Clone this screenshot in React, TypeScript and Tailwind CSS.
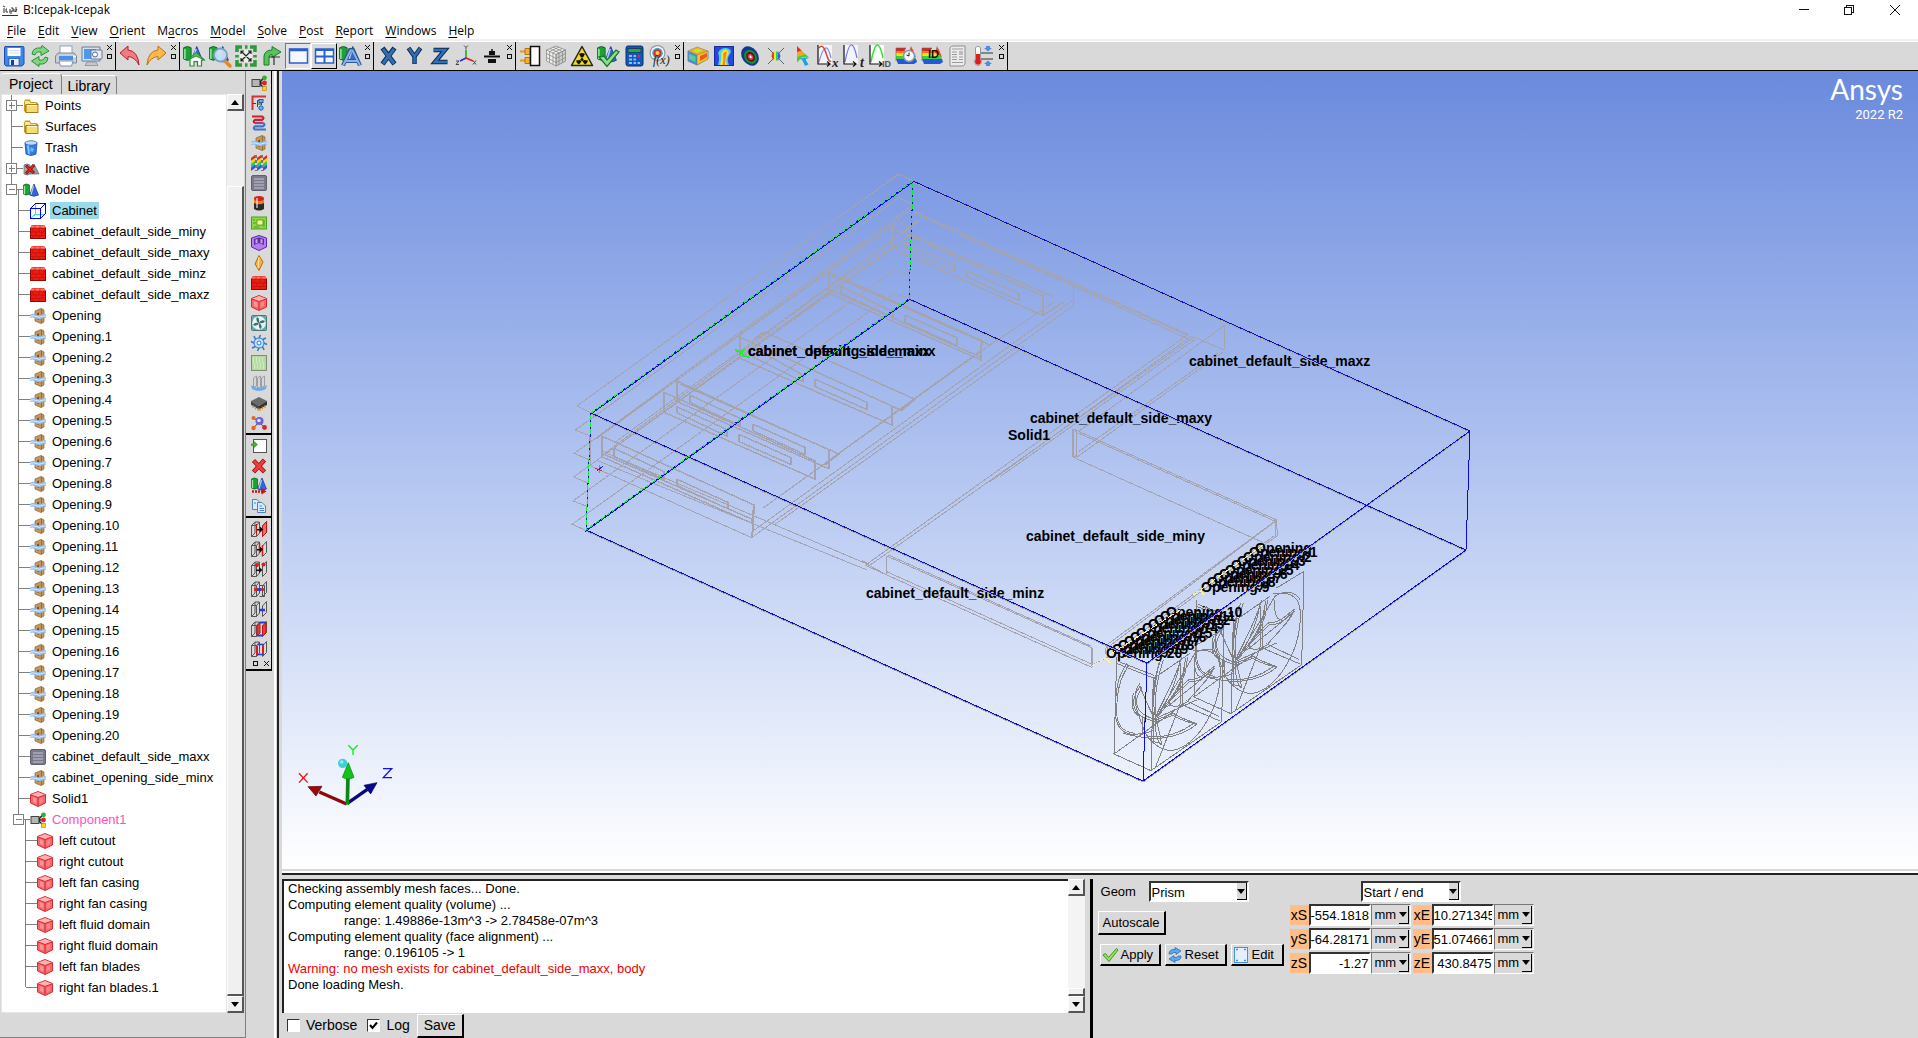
import React from "react";

type IconDef = { label: string; art: React.ReactNode };

/* ---------- small 16px object icons ---------- */

const Folder = (
  <g>
    <path d="M1 4 L1 13 L3 15 L15 15 L15 5 L13 4 L8 4 L7 1.500 L2 1.500 Z" fill="#c79b26" />
    <path d="M2 3 H6.500 L7.500 5 H13 V7 H2 Z" fill="#f7e7a0" />
    <rect x="3" y="6.500" width="12" height="8" fill="#f5dc6e" stroke="#8e6c14" strokeWidth="0.800" />
    <path d="M4 7.500 H14" stroke="#fff8cf" />
  </g>
);
const Trash = (
  <g>
    <path d="M2 3 L3 14 Q8 17 13 14 L14 3 Z" fill="#2f7de0" stroke="#1553a8" strokeWidth="0.800" />
    <path d="M4 5 L5 14 L7 14.500 L6 5 Z" fill="#8cc4ff" />
    <ellipse cx="8" cy="3" rx="6" ry="2.200" fill="#bfe0ff" stroke="#1f64bd" strokeWidth="0.800" />
    <path d="M8 7 L11 9 L10 12 L7 11 Z" fill="#6fb2ff" />
  </g>
);
const Inactive = (
  <g>
    <path d="M1 4 Q4 2 7 4 V13 Q4 15 1 13 Z" fill="#a9a9a9" stroke="#666" strokeWidth="0.700" />
    <path d="M11 3 L16 13 H7 Z" fill="#9a9a9a" stroke="#666" strokeWidth="0.700" />
    <path d="M3 4.500 L11 12 M11 4 L3 12.500" stroke="#7a0b0b" strokeWidth="3" />
    <path d="M3.500 5 L10.500 11.500 M10.500 4.500 L3.500 12" stroke="#e62a2a" strokeWidth="1.600" />
  </g>
);
const ModelIcon = (
  <g>
    <path d="M0.500 3 Q3.500 1 6.500 3 V12 Q3.500 14 0.500 12 Z" fill="#1ba336" stroke="#0a5f1a" strokeWidth="0.700" />
    <path d="M1.500 4 V12" stroke="#9be8a4" strokeWidth="1.200" />
    <path d="M11 2 L15.500 13 Q11 15.500 6.500 13 Z" fill="#3565d8" stroke="#173a92" strokeWidth="0.700" />
    <path d="M10.500 4 L8 12.500" stroke="#b5cdfd" strokeWidth="1.200" />
  </g>
);
const CabinetIcon = (
  <g fill="none" strokeWidth="1" shapeRendering="crispEdges">
    <path d="M5.500 1 V11 H15 M5.500 11 L1 15" stroke="#33e0ee" />
    <path d="M0.500 5.500 H10.500 V15.500 H0.500 Z M0.500 5.500 L5.500 0.500 H15.500 L10.500 5.500 M15.500 0.500 V10.500 L10.500 15.500" stroke="#0000f0" />
  </g>
);
const Wall = (
  <g>
    <path d="M2 1 H14 L16 4 V15 H0 V4 Z" fill="#ee1c12" />
    <path d="M2 1.500 H14 L15.500 4 H0.500 Z" fill="#ff7a6c" />
    <path d="M0 4 H16 M0 8 H16 M0 11.500 H16 M3 4 V8 M9 4 V8 M14 4 V8 M6 8 V11.500 M12 8 V11.500 M3 11.500 V15 M9 11.500 V15 M5 1.500 V4 M10 1.500 V4" stroke="#b80f08" strokeWidth="0.600" fill="none" />
    <path d="M0.500 4 V14.500 H15.500 V4" stroke="#8c0a05" fill="none" />
  </g>
);
const OpeningIcon = (
  <g>
    <path d="M5 3 L11 0.500 L14 2 V14 L11 15.500 L5 13 Z" fill="#c4985c" stroke="#8a6430" strokeWidth="0.700" />
    <path d="M11.500 0.800 V15.300" stroke="#946c38" />
    <path d="M7 5.500 L9 4.500 V12 L7 11 Z" fill="#6a5434" />
    <path d="M0 7 Q3 5 6 6.500 T12 6.500 T16 7 V10 Q14 9 12 10.500 T6 10.500 T0 10 Z" fill="#8fbbf0" />
    <path d="M0 8.500 Q3 7 6 8.500 T12 8.500 T16 8.500" stroke="#dcecff" fill="none" />
  </g>
);
const Solid = (
  <g>
    <path d="M8 0.500 L15.500 3.500 V12 L8 15.500 L0.500 12 V3.500 Z" fill="#f4686c" stroke="#d01c26" strokeWidth="0.900" />
    <path d="M8 1 L15 3.800 L8 6.500 L1 3.800 Z" fill="#ffb4b2" />
    <path d="M8 6.500 V15 M1 4 L8 6.500 L15 4" stroke="#da2630" fill="none" />
    <path d="M3 6 L6.500 7.500 V12.500 L3 11 Z" fill="#fb9496" />
    <path d="M13 6 L9.500 7.500 V12.500 L13 11 Z" fill="#ff8286" />
  </g>
);
const Grille = (
  <g>
    <rect x="0.500" y="0.500" width="15" height="15" rx="1.500" fill="#7a7a8c" stroke="#60606e" />
    <path d="M3 4 H13 M3 7 H13 M3 10 H13 M3 13 H13" stroke="#c4c4cf" strokeWidth="1.200" />
  </g>
);
const Assembly = (
  <g>
    <rect x="1" y="4.500" width="8" height="7" fill="#b5b5b5" stroke="#444" />
    <path d="M9 7 L13 2.500 M9 8 H13 M9 9 L13 13" stroke="#222" strokeWidth="1.500" />
    <circle cx="13.500" cy="2.800" r="2.400" fill="#26b52c" />
    <circle cx="13.500" cy="8" r="2.400" fill="#e02323" />
    <rect x="11.500" y="11.500" width="4" height="4" fill="#ffd21f" stroke="#b08000" strokeWidth="0.600" />
  </g>
);

/* ---------- side toolbar ---------- */

const plates = (mode: React.ReactNode) => (
  <g fill="none">
    <path d="M0.500 4.500 L4 1 V12 L0.500 15.500 Z M0.500 4.500 H5.500 V15.500 H0.500 M5.500 4.500 L8.500 1 H4 M5.500 15.500 L8.500 12 V1" stroke="#555" />
    <path d="M11.500 5 L15.500 0.500 V11.500 L11.500 15.500 Z" stroke="#555" />
    {mode}
  </g>
);

const sideA: IconDef[] = [
  { label: "Create assemblies", art: Assembly },
  {
    label: "Create networks",
    art: (
      <g fill="none">
        <path d="M1.500 15 V1.500 H15" stroke="#d83030" strokeWidth="2" />
        <path d="M1.500 8.500 H5 M6.500 12 V5.500 H10.500 V10 M6.500 9 H10.500" stroke="#444" />
        <rect x="8" y="4.500" width="4" height="3" fill="#6fb0f5" stroke="#1d5eb5" />
        <circle cx="10" cy="13" r="2.200" fill="#6fb0f5" stroke="#1d5eb5" />
      </g>
    ),
  },
  {
    label: "Create heat exchangers",
    art: (
      <g fill="none" strokeWidth="2.200">
        <path d="M1 1.500 H11 Q14 3 11 4.800 H4 Q1.500 6.500 4 8" stroke="#cf1f2b" />
        <path d="M4 8 H12" stroke="#8a4a90" />
        <path d="M12 8 Q15 9.500 12 11.300 H4 Q1.500 13 4 14.500 H15" stroke="#3c72d0" />
      </g>
    ),
  },
  { label: "Create openings", art: OpeningIcon },
  {
    label: "Create periodic boundaries",
    art: (
      <g>
        {[0, 6, 12].map((x) => (
          <g key={x}>
            <path d={`M${x} 3 L${x + 4} 0 V3 L${x} 6 Z`} fill="#ee2222" />
            <path d={`M${x} 6 L${x + 4} 3 V6 L${x} 9 Z`} fill="#ffd11a" />
            <path d={`M${x} 9 L${x + 4} 6 V9.500 L${x} 12.500 Z`} fill="#25cf4c" />
            <path d={`M${x} 12.500 L${x + 4} 9.500 V13 L${x} 16 Z`} fill="#2a58ef" />
          </g>
        ))}
        <path d="M5 0 V16 M11 0 V16" stroke="#111" strokeDasharray="3 2" />
      </g>
    ),
  },
  { label: "Create grille", art: Grille },
  {
    label: "Create sources",
    art: (
      <g>
        <path d="M3 5 V14 Q8 17 13 14 V5 Z" fill="#2a2a2a" />
        <path d="M3 4 V8 Q8 10.500 13 8 V4 Z" fill="#f0821e" />
        <ellipse cx="8" cy="3.500" rx="5" ry="2.500" fill="#d81e1e" />
        <path d="M6 3 V13" stroke="#fff" strokeOpacity="0.700" strokeWidth="1.500" />
      </g>
    ),
  },
  {
    label: "Create printed circuit boards",
    art: (
      <g>
        <rect x="0.500" y="2" width="15" height="12" fill="#8bd845" stroke="#4c9f1c" />
        <rect x="6" y="5" width="6" height="5" fill="#f3f48a" stroke="#3f8a18" strokeWidth="0.700" />
        <path d="M2 5 H4 M2 8 H5 M13 5 V12 M3 12 H8" stroke="#4f9c30" />
      </g>
    ),
  },
  {
    label: "Create enclosures",
    art: (
      <g>
        <path d="M8 0.500 L15.500 3 V12 L8 15.500 L0.500 12 V3 Z" fill="#b47cf0" stroke="#5a28a0" />
        <path d="M3 4 L8 2.500 L13 4 V10 L8 8 L3 10 Z" fill="#5d2e9f" />
        <path d="M4.500 4.500 L6.500 4 V8 L4.500 8.500 Z M9.500 4 L11.500 4.500 V8.500 L9.500 8 Z" fill="#c8a5f5" />
      </g>
    ),
  },
  {
    label: "Create plates",
    art: (
      <g>
        <path d="M8 0.500 L12 7 L8 15.500 L4 9 Z" fill="#f7b23c" stroke="#b86b0a" />
        <path d="M8 2 L7 13" stroke="#ffe6a8" />
      </g>
    ),
  },
  { label: "Create walls", art: Wall },
  { label: "Create blocks", art: Solid },
  {
    label: "Create fans",
    art: (
      <g>
        <rect x="0.500" y="0.500" width="15" height="15" rx="1" fill="#6aa9a9" stroke="#427b7b" />
        <circle cx="8" cy="8" r="6.800" fill="#e8f4f4" />
        <path d="M8 8 Q4 6 6 2 Q9 3 8 8 Q10 4 14 6 Q13 9 8 8 Q12 10 10 14 Q7 13 8 8 Q6 12 2 10 Q3 7 8 8" fill="#3f6f72" />
      </g>
    ),
  },
  {
    label: "Create blowers",
    art: (
      <g fill="none" stroke="#2f7bd0">
        <circle cx="8" cy="8" r="5" fill="#bfe0fb" />
        <circle cx="8" cy="8" r="2" fill="#fff" />
        <path d="M8 3 L9.500 0 M11.500 4.500 L15 3 M13 8 L16 9.500 M11.500 11.500 L13 15 M8 13 L6.500 16 M4.500 11.500 L1 13 M3 8 L0 6.500 M4.500 4.500 L3 1" strokeWidth="1.600" />
      </g>
    ),
  },
  {
    label: "Create resistances",
    art: (
      <g>
        <rect x="0.500" y="0.500" width="15" height="15" fill="#b3d8a0" stroke="#7d8f74" />
        <path d="M3 2 Q1 5 3 8 T3 14 M6 2 Q4 5 6 8 T6 14 M9 2 Q7 5 9 8 T9 14 M12 2 Q10 5 12 8 T12 14" stroke="#d9f0cc" fill="none" />
      </g>
    ),
  },
  {
    label: "Create heat sinks",
    art: (
      <g>
        <path d="M0 10 Q8 16 16 10 L15 14 Q8 18 1 14 Z" fill="#6fabee" />
        <path d="M2.500 3 L5.500 1 V11 L2.500 12.500 Z M6.500 3 L9.500 1 V12 L6.500 13.500 Z M10.500 3 L13.500 1 V11 L10.500 12.500 Z" fill="#d6d6da" stroke="#85858c" strokeWidth="0.700" />
      </g>
    ),
  },
  {
    label: "Create packages",
    art: (
      <g>
        <path d="M0 6 L8 2 L16 6 L8 11 Z" fill="#6a6a6a" />
        <path d="M0 6 L8 11 V14.500 L0 10 Z" fill="#454545" />
        <path d="M16 6 L8 11 V14.500 L16 10 Z" fill="#333" />
        <path d="M2 10 V13 M4.500 11.500 V14.500 M7 13 V16 M9 13 V16 M11.500 11.500 V14.500 M14 10 V13" stroke="#d08a30" />
      </g>
    ),
  },
  {
    label: "Create materials",
    art: (
      <g>
        <path d="M3 3 L8 7 L13.500 12.500 M8 7 L2.500 13" stroke="#444" />
        <circle cx="8.500" cy="6" r="4" fill="#6a63d8" />
        <circle cx="8" cy="5.500" r="1.800" fill="#e4e2ff" />
        <circle cx="2.500" cy="3" r="2" fill="#e8622a" />
        <circle cx="2.500" cy="13" r="2.200" fill="#e8622a" />
        <circle cx="13.500" cy="12.500" r="2.400" fill="#d72626" />
      </g>
    ),
  },
];

const sideB: IconDef[] = [
  {
    label: "Edit object",
    art: (
      <g>
        <rect x="2.500" y="1.500" width="13" height="13" fill="#fdfdfd" stroke="#555" />
        <path d="M0 5.500 H3 V3 L7 6.500 L3 10 V8 H0 Z" fill="#3fae2a" />
      </g>
    ),
  },
  {
    label: "Delete object",
    art: (
      <g>
        <path d="M2.500 2.500 L13.500 14 M13.500 2 L2.500 14" stroke="#9a1212" strokeWidth="4.500" />
        <path d="M3 3 L13 13.500 M13 2.500 L3 13.500" stroke="#f03a3a" strokeWidth="3" />
      </g>
    ),
  },
  {
    label: "Move object",
    art: (
      <g>
        <g transform="translate(0 -2)">{ModelIcon}</g>
        <path d="M1 13.500 H11" stroke="#d31414" strokeWidth="2.500" strokeDasharray="2 1" />
        <path d="M10.500 10 L15.500 13.500 L10.500 16.500 Z" fill="#d31414" />
      </g>
    ),
  },
  {
    label: "Copy object",
    art: (
      <g fill="#dcebfb" stroke="#4d82c4">
        <path d="M1.500 1.500 H6 L9.500 5 V11.500 H1.500 Z" />
        <path d="M6.500 4.500 H11 L14.500 8 V14.500 H6.500 Z" />
        <path d="M8.500 8 H11 M8.500 10.500 H13 M8.500 12.500 H13 M3 5 H5" />
      </g>
    ),
  },
];

const sideC: IconDef[] = [
  {
    label: "Align and morph faces",
    art: plates(
      <g>
        <path d="M11.500 5 L15.500 0.500 V11.500 L11.500 15.500 Z" fill="#f26a6a" stroke="#c01515" />
        <path d="M5.500 3 V14" stroke="#c01515" />
        <path d="M6 8 H9 V5.500 L12.500 8.500 L9 11.500 V9.500 H6 Z" fill="#111" />
      </g>,
    ),
  },
  {
    label: "Align and morph edges",
    art: plates(
      <g>
        <path d="M11.500 4 V15 M8.500 2 V12" stroke="#e01818" strokeWidth="1.500" />
        <path d="M6 8 H9 V5.500 L12 8.500 L9 11.500 V9.500 H6 Z" fill="#111" />
      </g>,
    ),
  },
  {
    label: "Align and morph vertices",
    art: plates(
      <g>
        <circle cx="6" cy="4" r="2" fill="#e01818" />
        <circle cx="12.500" cy="3.500" r="2" fill="#e01818" />
        <path d="M5 8.500 H8 V6 L11.500 9 L8 12 V10 H5 Z" fill="#111" />
      </g>,
    ),
  },
  {
    label: "Align object centers",
    art: plates(
      <g>
        <path d="M8.500 4.500 H13.500 V15.500 H8.500" stroke="#555" />
        <path d="M3 8.500 H13" stroke="#e01818" strokeWidth="2.500" />
        <path d="M6 8.500 H10" stroke="#1f3fe0" strokeWidth="2.500" />
      </g>,
    ),
  },
  { label: "Align face centers", art: plates(<path d="M8 9 H14" stroke="#1f3fe0" strokeWidth="2.500" />) },
  {
    label: "Match faces",
    art: plates(
      <g>
        <path d="M6 5 L9 1.500 V12 L6 15 Z M11.500 5 L15 1.500 V12 L11.500 15 Z" fill="#f03a3a" stroke="#c01515" />
        <path d="M9 1.500 H15 M6 14.500 H12" stroke="#1f3fe0" strokeWidth="2" />
      </g>,
    ),
  },
  {
    label: "Match edges",
    art: plates(
      <g>
        <path d="M6 4.500 V15 M12 4.500 V15" stroke="#e01818" strokeWidth="2" />
        <path d="M7 3.500 H13 M6 13.500 H12" stroke="#1f3fe0" strokeWidth="1.500" />
      </g>,
    ),
  },
];

/* ---------- main toolbar (24px art) ---------- */

const rainbow = (
  <g>
    <path d="M2 4 H12 L10 8 H2 Z" fill="#e32222" />
    <path d="M2 7 H12 L19 5 L20 9 H2 Z" fill="#ff7d1a" />
    <path d="M2 9 H20 L21 12 H2 Z" fill="#ffdf1f" />
    <path d="M2 12 H21 L22 15 H2 Z" fill="#3fce3a" />
    <path d="M2 15 H22 L23 18 L20 20 H4 Z" fill="#2357df" />
    <path d="M17 2 L22 13 L15 9 Z" fill="#f0441e" />
    <path d="M2 4 H12 M2 4 V17" stroke="#666" strokeWidth="0.600" fill="none" />
  </g>
);
const plotAxes = <path d="M2 1 V20 H14 M11 17.500 L14 20 L11 22.500" stroke="#111" strokeWidth="1.200" fill="none" />;
const bigModel = <g transform="translate(1 0) scale(1.250)">{ModelIcon}</g>;

const bars: IconDef[][] = [
  [
    {
      label: "Save project",
      art: (
        <g>
          <path d="M3 2.500 H21 Q22 2.500 22 4 V20 L20 22 H4 L2.500 20.500 V4 Z" fill="#3f86ea" stroke="#1b4fae" />
          <rect x="5.500" y="4" width="13" height="8" fill="#fff" />
          <path d="M7 6.500 H17 M7 9 H17" stroke="#cfdcf0" />
          <rect x="7" y="14.500" width="10" height="7" fill="#e6edf8" stroke="#1b4fae" strokeWidth="0.700" />
          <rect x="9" y="16" width="3" height="5" fill="#1c3f8a" />
        </g>
      ),
    },
    {
      label: "Reload",
      art: (
        <g fill="#7ed67f" stroke="#2a8f35">
          <path d="M4 10 Q5 3 13 4 L14 1.500 L21 7 L13 11.500 L13 8 Q8 7 7 11 Z" />
          <path d="M20 14 Q19 21 11 20 L11 22.500 L3.500 17 L11 12.500 V16 Q16 17 17 13 Z" />
        </g>
      ),
    },
    {
      label: "Print",
      art: (
        <g>
          <rect x="6" y="2" width="12" height="9" fill="#fff" stroke="#8aa4c2" />
          <path d="M1.500 12 L4 9 H20 L22.500 12 V19 H1.500 Z" fill="#c9cfd8" stroke="#7e8896" />
          <rect x="5" y="12" width="14" height="4" fill="#4c8fe6" />
          <path d="M5 17 H19 L17.500 22 H6.500 Z" fill="#fff" stroke="#7793b8" />
          <path d="M19 12.500 H22" stroke="#fff" strokeWidth="1.500" />
        </g>
      ),
    },
    {
      label: "Create image file",
      art: (
        <g>
          <path d="M2 3 H20 V17 H2 Z" fill="#d6dfec" stroke="#6c7c96" />
          <rect x="4" y="5" width="12" height="10" fill="#4c98ee" />
          <rect x="11" y="6" width="11" height="9" rx="1" fill="#e9edf3" stroke="#66758d" />
          <circle cx="15" cy="10.500" r="2.500" fill="#fff" stroke="#4a6a9a" />
          <path d="M7 18 H16 L18 21.500 H5 Z" fill="#c2c8d2" stroke="#7a8494" strokeWidth="0.700" />
        </g>
      ),
    },
  ],
  [
    {
      label: "Undo",
      art: <path d="M2 9 L10 2 V6 Q20 7 21 21 Q17 13 10 12.500 V16 Z" fill="#f27b83" stroke="#b3202d" />,
    },
    {
      label: "Redo",
      art: <path d="M22 9 L14 2 V6 Q4 7 3 21 Q7 13 14 12.500 V16 Z" fill="#ffb84c" stroke="#b87411" />,
    },
  ],
  [
    {
      label: "Home position",
      art: (
        <g>
          {bigModel}
          <path d="M14 9 L6.500 16 H8 V22 H12 V17.500 H15.500 V22 H19.500 V16 H22 Z" fill="#f4f9f4" stroke="#2b8b3a" strokeWidth="1.200" />
          <path d="M14 8.500 L6 16 L14 12 L22.500 16 Z" fill="#58c064" stroke="#2b8b3a" />
        </g>
      ),
    },
    {
      label: "Zoom in",
      art: (
        <g>
          {bigModel}
          <path d="M17 17 L22 22" stroke="#e08a22" strokeWidth="3.500" strokeLinecap="round" />
          <circle cx="12.500" cy="11" r="6.500" fill="#cfe6fb" fillOpacity="0.900" stroke="#7d9fc4" strokeWidth="1.800" />
        </g>
      ),
    },
    {
      label: "Scale to fit",
      art: (
        <g>
          <rect x="6" y="6" width="12" height="12" fill="#e9efe9" />
          <path d="M3 8 V3 H8 M16 3 H21 V8 M21 16 V21 H16 M8 21 H3 V16" fill="none" stroke="#2e9a3a" strokeWidth="3.500" />
          <path d="M11 3 H13.500 M11 21 H13.500 M3 11 V13.500 M21 11 V13.500" stroke="#2e9a3a" strokeWidth="3.500" />
          <path d="M7 7 L17 17 M17 7 L7 17 M7 10 V7 H10 M14 7 H17 V10 M17 14 V17 H14 M10 17 H7 V14" stroke="#222" strokeWidth="1.200" fill="none" />
        </g>
      ),
    },
    {
      label: "Rotate about screen normal",
      art: (
        <g>
          <path d="M4 21 V12 Q5 6 12 6 V2.500 L21 8 L12 13.500 V10.500 Q9 10.500 9 13 V21 Z" fill="#57c35c" stroke="#1d7a29" />
          <path d="M14 12 V21 M9 13 H20" stroke="#333" strokeWidth="1.200" />
        </g>
      ),
    },
    {
      label: "One viewing window",
      art: (
        <g>
          <rect x="3.500" y="5" width="18" height="14" fill="#f3f8ff" stroke="#2b5fd0" strokeWidth="1.500" />
          <path d="M3.500 6 H21.500" stroke="#2b5fd0" strokeWidth="2.500" />
        </g>
      ),
    },
    {
      label: "Four viewing windows",
      art: (
        <g>
          <rect x="3.500" y="5" width="18" height="14" fill="#f3f8ff" stroke="#2b5fd0" strokeWidth="1.500" />
          <path d="M3.500 6 H21.500 M3.500 12.500 H21.500 M12.500 5 V19" stroke="#2b5fd0" strokeWidth="2" />
        </g>
      ),
    },
    {
      label: "Display object names",
      art: (
        <g>
          {bigModel}
          <path d="M5 21.500 L12 6 H15 L22 21.500 M7.500 17 H19" stroke="#2d578f" strokeWidth="4" fill="none" />
          <path d="M5 21.500 L12.500 6.500 H14.500 L22 21.500 M8 17 H19" stroke="#8bb3e3" strokeWidth="2" fill="none" />
        </g>
      ),
    },
  ],
  [
    { label: "Orient X", art: <g fill="none"><path d="M6.500 4 L18.500 20 M18.500 4 L6.500 20" stroke="#0d2b55" strokeWidth="5" /><path d="M7 5 L18 19.500 M18 5 L7 19.500" stroke="#2f70b5" strokeWidth="3" /></g> },
    { label: "Orient Y", art: <g fill="none"><path d="M6.500 4 L12.500 12.500 L18.500 4 M12.500 12 V20" stroke="#0d2b55" strokeWidth="4.500" /><path d="M7 4.500 L12.500 12.500 L18 4.500 M12.500 12 V19.500" stroke="#2f70b5" strokeWidth="2.500" /></g> },
    { label: "Orient Z", art: <g fill="none"><path d="M5.500 6 H17 L7 18 H19.500" stroke="#0d2b55" strokeWidth="4.500" /><path d="M6 6 H17 L7 18 H19" stroke="#2f70b5" strokeWidth="2.500" /></g> },
    {
      label: "Isometric view",
      art: (
        <g fill="none">
          <path d="M12 14 V6" stroke="#1aa01a" strokeWidth="1.500" />
          <path d="M12 14 L6 17" stroke="#2030d0" strokeWidth="1.800" />
          <path d="M12 14 L19 17" stroke="#d02020" strokeWidth="1.800" />
          <path d="M10 1.500 L12 3.500 L14 1.500 M12 3.500 V5.500 M2 17 H5 L2 20.500 H5 M19 16.500 L22 20.500 M22 16.500 L19 20.500" stroke="#444" />
        </g>
      ),
    },
    { label: "Reverse orientation", art: <g><path d="M4 12.500 H20" stroke="#111" strokeWidth="2" /><rect x="9" y="7" width="6" height="4" fill="#111" /><rect x="8" y="15" width="8" height="4" fill="#111" /><path d="M12 5 V8" stroke="#111" strokeWidth="1.500" /></g> },
  ],
  [
    {
      label: "Power and temperature limits",
      art: (
        <g>
          <path d="M2 7.500 H8 M2 16.500 H8" stroke="#e09a1c" strokeWidth="2" />
          <path d="M7 4.500 H12 V10.500 H7 Z M7 13.500 H12 V19.500 H7 Z" fill="#f2b130" stroke="#b47608" />
          <rect x="12.500" y="2.500" width="9" height="19" fill="#fff" stroke="#111" strokeWidth="1.500" />
        </g>
      ),
    },
    {
      label: "Generate mesh",
      art: (
        <g stroke="#8b8b8b" strokeWidth="0.800">
          <path d="M12 2 L21.500 6 V17 L12 22 L2.500 17 V6 Z" fill="#f0f0ee" />
          <path d="M12 10.500 L21.500 6 V17 L12 22 Z" fill="#cfcfcc" />
          <path d="M2.500 6 L12 10.500 L21.500 6 M12 10.500 V22 M5.500 7.500 V18.500 M9 9 V20.500 M15 9 V20.500 M18.500 7.500 V18.500 M2.500 9.500 L12 14.500 L21.500 9.500 M2.500 13.500 L12 18.500 L21.500 13.500 M6 4.500 L15.500 9 M9 3 L18.500 7.500 M18 4.500 L8.500 9 M15 3 L5.500 7.500" fill="none" />
        </g>
      ),
    },
    {
      label: "Radiation",
      art: (
        <g>
          <path d="M12 2.500 L22.500 21.500 H1.500 Z" fill="#f2de13" stroke="#222" strokeWidth="1.500" strokeLinejoin="round" />
          <circle cx="12" cy="15.500" r="1.500" fill="#111" />
          <path d="M11 13.500 L9 10 Q12 8 15 10 L13 13.500 Z M10 16 L6 16.500 Q6.500 19.500 9 20.500 L11.500 17.500 Z M14 16 L18 16.500 Q17.500 19.500 15 20.500 L12.500 17.500 Z" fill="#111" />
        </g>
      ),
    },
    {
      label: "Check model",
      art: (
        <g>
          {bigModel}
          <path d="M3 13 L8 12 L11 16 L20 6 L23 8 L11 22.500 Z" fill="#8be08b" stroke="#177a22" strokeWidth="1.300" />
        </g>
      ),
    },
    {
      label: "Run solution",
      art: (
        <g>
          <rect x="4" y="2" width="17" height="20" rx="2" fill="#1756b8" stroke="#0b2f70" />
          <rect x="6" y="4.500" width="13" height="4" fill="#2fa34a" stroke="#0c2b5c" strokeWidth="0.700" />
          <path d="M7 12 H10 M11.500 12 H14 M7 15.500 H10 M11.500 15.500 H14 M7 19 H10 M11.500 19 H14 M15.500 19 H18" stroke="#7fc0ff" strokeWidth="2" />
          <rect x="15.500" y="11" width="2.500" height="2.500" fill="#e22" />
        </g>
      ),
    },
    {
      label: "Run optimization",
      art: (
        <g>
          <circle cx="9.500" cy="9" r="8" fill="#8f9ba8" />
          <circle cx="9.500" cy="9" r="6.800" fill="#fff" />
          <circle cx="9.500" cy="9" r="5.300" fill="#38a9de" />
          <circle cx="9.500" cy="9" r="3.800" fill="#e12a2a" />
          <circle cx="9.500" cy="9" r="2" fill="#ffd52e" />
          <text x="5" y="20" fontSize="12" fontStyle="italic" fontFamily="Liberation Serif, serif" fill="#222">f(x)</text>
        </g>
      ),
    },
  ],
  [
    {
      label: "Object face",
      art: (
        <g stroke="#777" strokeWidth="0.500">
          <path d="M2 7 L11 3 L22 7 V15 L11 21 L2 17 Z" fill="#f7a823" />
          <path d="M2 7 L11 11 V21 L2 17 Z" fill="#3f8fe8" />
          <path d="M3 10 L9.500 12.500 V18 L3 15 Z" fill="#59cf8c" stroke="none" />
          <path d="M11 11 L22 7 V15 L11 21 Z" fill="#f4c820" />
          <path d="M14 12 L21 9 V13 L14 17 Z" fill="#ee5a1e" stroke="none" />
          <path d="M6 6.500 L12 4.500 L17 6.500 L11 9 Z" fill="#c9e02a" stroke="none" />
        </g>
      ),
    },
    {
      label: "Plane cut",
      art: (
        <g>
          <rect x="2.500" y="2.500" width="19" height="19" fill="#2946e0" stroke="#1a2b96" />
          <path d="M6 21 Q8 14 6 9 Q8 4 14 4 Q21 5 18 10 Q14 14 17 21 Z" fill="#46d2e4" />
          <path d="M8 21 Q10 14 9 9.500 Q11 5 14 5.500 Q18 7 16 11 Q13 15 15 21 Z" fill="#f7e22c" />
          <path d="M10.500 21 Q12 14 11 10 Q13 7 15 8 Q13 14 13 21 Z" fill="#f0892a" />
        </g>
      ),
    },
    {
      label: "Isosurface",
      art: (
        <g transform="rotate(-35 12 12)">
          <ellipse cx="12" cy="12" rx="8" ry="10.500" fill="#123596" />
          <ellipse cx="12" cy="13" rx="6" ry="7.500" fill="#158b34" />
          <ellipse cx="12" cy="13" rx="4" ry="5" fill="#5a1212" />
          <ellipse cx="12" cy="13" rx="2.500" ry="3.200" fill="#f03a5a" />
          <ellipse cx="12" cy="13" rx="1" ry="1.300" fill="#fff" />
        </g>
      ),
    },
    {
      label: "Point",
      art: (
        <g>
          <path d="M4 4 L20 20 M20 4 L4 20" stroke="#555" strokeWidth="0.900" />
          <path d="M7.500 12 A4.500 4.500 0 0 1 10 8 V16 A4.500 4.500 0 0 1 7.500 12" fill="#ee3a2a" />
          <rect x="10" y="7.500" width="2.200" height="9" fill="#f5e62a" />
          <rect x="12" y="7.500" width="2.200" height="9" fill="#2fd056" />
          <path d="M14 8 A4.500 4.500 0 0 1 14 16 Z" fill="#3a5cf0" />
        </g>
      ),
    },
    {
      label: "Surface probe",
      art: (
        <g>
          <path d="M7 2 V9 L12 7 Z" fill="#ee2a1a" />
          <path d="M7 8 L11.500 6.500 L15.500 10 L7 14 Z" fill="#f5a81f" />
          <path d="M7 13 L15.500 10 L19 13.500 H12 L7 18.500 Z" fill="#43cf3c" />
          <path d="M10 14.500 L19 13.500 L15.500 15.500 L18.500 20.500 L15 22 L12.500 16.500 Z" fill="#18a2e8" />
        </g>
      ),
    },
    {
      label: "Variation plot",
      art: (
        <g>
          <rect x="2" y="1" width="14" height="19" fill="#f4f4fb" />
          <path d="M3 18 Q10 -8 15 14" stroke="#8a8aee" strokeWidth="1.200" fill="none" />
          <path d="M3 4 Q7 -1 10 9 T15 17" stroke="#c8502a" strokeWidth="1.500" fill="none" />
          {plotAxes}
          <text x="16" y="22.500" fontSize="13" fontStyle="italic" fontFamily="Liberation Serif, serif" fontWeight="bold" fill="#222">x</text>
        </g>
      ),
    },
    {
      label: "History plot",
      art: (
        <g>
          <rect x="2" y="1" width="14" height="19" fill="#f4f4fb" />
          <path d="M3 18 Q9 -14 15 14" stroke="#7a7af0" strokeWidth="1.300" fill="none" />
          {plotAxes}
          <text x="18" y="22.500" fontSize="14" fontStyle="italic" fontFamily="Liberation Serif, serif" fontWeight="bold" fill="#222">t</text>
        </g>
      ),
    },
    {
      label: "Trials plot",
      art: (
        <g>
          <rect x="2" y="1" width="14" height="19" fill="#f8fdf8" />
          <path d="M3 18 Q9 -14 15 14" stroke="#2ee02e" strokeWidth="1.400" fill="none" />
          {plotAxes}
          <text x="14" y="22.500" fontSize="9" fontFamily="Liberation Sans, sans-serif" fontWeight="bold" fill="#555">ID</text>
        </g>
      ),
    },
    {
      label: "Transient settings",
      art: (
        <g>
          {rainbow}
          <circle cx="15" cy="12" r="5.500" fill="#f5f8fc" stroke="#8497ad" strokeWidth="1.500" />
          <path d="M15 8.500 V12 L12.500 11" stroke="#223" fill="none" />
        </g>
      ),
    },
    {
      label: "Load solution ID",
      art: (
        <g>
          {rainbow}
          <text x="8" y="14" fontSize="11" fontFamily="Liberation Sans, sans-serif" fontWeight="bold" fill="#111">ID</text>
        </g>
      ),
    },
    {
      label: "Summary report",
      art: (
        <g>
          <path d="M4 4 Q5 1.500 8 2 H19 V20 Q18 22.500 15 22 H4 Z" fill="#ececec" stroke="#8f8f8f" />
          <path d="M6 5 H17 M6 8 H11 M6 10.500 H11 M6 13 H11 M6 15.500 H11 M13 13 H17 M13 15.500 H17 M6 18.500 H17" stroke="#9a9a9a" strokeWidth="1.200" />
          <rect x="13" y="7" width="4" height="4" fill="#b9b9c8" />
        </g>
      ),
    },
    {
      label: "Power and temperature values",
      art: (
        <g>
          <path d="M3.500 3.500 Q6 1 8.500 3.500 V14 Q11 18 8.500 20.500 Q6 22.500 3.500 20.500 Q1 18 3.500 14 Z" fill="#fff" stroke="#999" />
          <path d="M4 10 H8 V14.500 Q10 18 8 20 Q6 21.500 4 20 Q2 18 4 14.500 Z" fill="#e01c1c" />
          <path d="M9 9 H21 M9 15 H21" stroke="#333" />
          <path d="M14 2 H18 V4 H20 L16 7.500 L12 4 H14 Z M14 22 H18 V20 H20 L16 16.500 L12 20 H14 Z" fill="#4a90e8" />
        </g>
      ),
    },
  ],
];

const Art = ({ art, size, box }: { art: React.ReactNode; size: number; box: number }) => (
  <svg width={size} height={size} viewBox={`0 0 ${box} ${box}`} className="shrink-0 overflow-visible" aria-hidden="true">
    {art}
  </svg>
);

const DockMarks = ({ row }: { row?: boolean }) => (
  <svg width={row ? 24 : 10} height={row ? 10 : 26} viewBox={row ? "0 0 24 10" : "0 0 10 26"} fill="none" stroke="#111" shapeRendering="crispEdges" className="block" aria-hidden="true">
    {row ? (
      <path d="M6.500 2.500 H10.500 V6.500 H6.500 Z M17 2 L22 7 M22 2 L17 7" />
    ) : (
      <path d="M2 2 L7 7 M7 2 L2 7 M2.500 11.500 H6.500 V15.500 H2.500 Z" />
    )}
  </svg>
);

/* ---------- top chrome ---------- */

const menus: [string, string, string][] = [
  ["", "F", "ile"],
  ["", "E", "dit"],
  ["", "V", "iew"],
  ["", "O", "rient"],
  ["M", "a", "cros"],
  ["", "M", "odel"],
  ["", "S", "olve"],
  ["", "P", "ost"],
  ["", "R", "eport"],
  ["", "W", "indows"],
  ["", "H", "elp"],
];

function TitleBar() {
  return (
    <header className="bg-white font-['Open_Sans',sans-serif] text-[12px] text-black">
      <div className="flex h-[20px] items-center">
        <svg width="16" height="16" viewBox="0 0 16 16" className="ml-[2px] mr-[5px]" fill="none" stroke="#333" aria-hidden="true">
          <path d="M1 4 L3 5 M2 6 V11 M5 7 H4 V10 H6 M8 7 V10 H7 M9 6 H11 V9 H9 V12 M12 10 V7 M13 10 L15 7 M14 5 V10 M0 13.500 H16" />
        </svg>
        <h1>B:Icepak-Icepak</h1>
        <div className="ml-auto flex">
          <button aria-label="Minimize" className="flex w-[45px] justify-center"><svg width="12" height="12" stroke="#111" shapeRendering="crispEdges"><path d="M1 5.500 H11" /></svg></button>
          <button aria-label="Restore" className="flex w-[46px] justify-center"><svg width="12" height="12" stroke="#111" fill="none" shapeRendering="crispEdges"><path d="M1.500 3.500 H8.500 V10.500 H1.500 Z M3.500 3 V1.500 H10.500 V8.500 H9" /></svg></button>
          <button aria-label="Close" className="flex w-[46px] justify-center"><svg width="12" height="12" stroke="#111"><path d="M1 1 L11 11 M11 1 L1 11" /></svg></button>
        </div>
      </div>
      <nav className="flex h-[19px] items-center gap-[12px] pl-[7px] pt-[3px]">
        {menus.map(([a, b, c]) => (
          <button key={a + b + c} className="leading-[16px]">
            {a}<u className="underline-offset-2">{b}</u>{c}
          </button>
        ))}
      </nav>
      <div className="h-[2px] bg-[#f0f0f0]" />
    </header>
  );
}

function MainToolbar() {
  return (
    <div className="flex h-[30px] shrink-0 items-stretch border-b border-t border-b-black border-t-white bg-[#d9d9d9]">
      {bars.map((bar, i) => (
        <div key={i} role="toolbar" className="flex items-center border-r border-black pl-px">
          {bar.map((ic) => (
            <button
              key={ic.label}
              aria-label={ic.label}
              className={
                "flex h-[26px] w-[26px] items-center justify-center " +
                (ic.label === "One viewing window"
                  ? "border border-b-white border-l-[#777] border-r-white border-t-[#777] bg-[#e4e4e4]"
                  : ic.label === "Four viewing windows"
                    ? "border border-b-black border-l-white border-r-black border-t-white"
                    : "")
              }
            >
              <Art art={ic.art} size={24} box={24} />
            </button>
          ))}
          <DockMarks />
        </div>
      ))}
    </div>
  );
}

/* ---------- project tree ---------- */

type Row = { depth: 0 | 1 | 2; label: string; icon: React.ReactNode; box?: "+" | "-"; end?: boolean };

const rows: Row[] = [
  { depth: 0, label: "Points", icon: Folder, box: "+" },
  { depth: 0, label: "Surfaces", icon: Folder },
  { depth: 0, label: "Trash", icon: Trash },
  { depth: 0, label: "Inactive", icon: Inactive, box: "+" },
  { depth: 0, label: "Model", icon: ModelIcon, box: "-", end: true },
  { depth: 1, label: "Cabinet", icon: CabinetIcon },
  ...["miny", "maxy", "minz", "maxz"].map((s): Row => ({ depth: 1, label: "cabinet_default_side_" + s, icon: Wall })),
  ...Array.from({ length: 21 }, (_, i): Row => ({ depth: 1, label: i ? `Opening.${i}` : "Opening", icon: OpeningIcon })),
  { depth: 1, label: "cabinet_default_side_maxx", icon: Grille },
  { depth: 1, label: "cabinet_opening_side_minx", icon: OpeningIcon },
  { depth: 1, label: "Solid1", icon: Solid },
  { depth: 1, label: "Component1", icon: Assembly, box: "-", end: true },
  ...["left cutout", "right cutout", "left fan casing", "right fan casing", "left fluid domain", "right fluid domain", "left fan blades"].map(
    (s): Row => ({ depth: 2, label: s, icon: Solid }),
  ),
  { depth: 2, label: "right fan blades.1", icon: Solid, end: true },
];

function Guides({ row }: { row: Row }) {
  const w = 21 + row.depth * 7;
  const x = [9.5, 16.5, 23.5][row.depth];
  return (
    <svg width={w} height="21" className="shrink-0" fill="none" stroke="#808080" shapeRendering="crispEdges" aria-hidden="true">
      <path d={`M${x} 0 V${row.end ? 10 : 21} M${x} 10.500 H${w}`} />
      {row.box && (
        <g>
          {row.box === "-" && <path d={`M${x + 7} 10 V21`} />}
          <rect x={x - 5} y="5.500" width="10" height="10" fill="#fff" />
          <path d={`M${x - 3} 10.500 H${x + 3}`} />
          {row.box === "+" && <path d={`M${x} 7 V14`} />}
        </g>
      )}
    </svg>
  );
}

const raised = "border-b-[#555] border-r-[#555] border-l-white border-t-white border-b-2 border-r-2 border-l border-t";

const Arrow = ({ up }: { up?: boolean }) => (
  <svg width="8" height="5" viewBox="0 0 8 5" aria-hidden="true">
    <path d={up ? "M0 5 L4 0 L8 5 Z" : "M0 0 L4 5 L8 0 Z"} fill="#000" />
  </svg>
);

function Sidebar() {
  return (
    <aside className="flex w-[246px] shrink-0 flex-col border-b border-r border-[#808080] bg-[#d9d9d9] pl-px">
      <div role="tablist" className="flex h-[23px] shrink-0 items-end text-[14px]">
        <button role="tab" aria-selected="true" className="h-[21px] rounded-t-sm border-r border-t border-r-[#808080] border-t-white px-[8px] leading-[20px]">Project</button>
        <button role="tab" aria-selected="false" className="h-[19px] rounded-tr-sm border-r border-t border-r-[#808080] border-t-white px-[6px] leading-[20px]">Library</button>
      </div>
      <div className="flex min-h-0 flex-1">
        <ul role="tree" className="min-w-0 flex-1 overflow-hidden border border-[#e6e6e6] bg-white">
          {rows.map((r) => (
            <li key={r.label} role="treeitem" aria-selected={r.label === "Cabinet"} className="flex h-[21px] items-center">
              <Guides row={r} />
              <Art art={r.icon} size={16} box={16} />
              <span
                className={
                  "ml-[4px] whitespace-nowrap px-[2px] text-[13px] leading-[17px] " +
                  (r.label === "Cabinet" ? "bg-[#9ad9ea]" : r.label === "Component1" ? "text-[#ff4fc0]" : "")
                }
              >
                {r.label}
              </span>
            </li>
          ))}
        </ul>
        <div className="mr-px flex w-[17px] flex-col bg-[#f0f0f0]">
          <button aria-label="Scroll up" className={"flex h-[17px] items-center justify-center bg-[#f0f0f0] " + raised}><Arrow up /></button>
          <div className="h-[75px]" />
          <div className={"flex-1 bg-[#f0f0f0] " + raised} />
          <button aria-label="Scroll down" className={"flex h-[17px] items-center justify-center bg-[#f0f0f0] " + raised}><Arrow /></button>
        </div>
      </div>
      <div className="h-[24px] shrink-0" />
    </aside>
  );
}

function SideTools() {
  return (
    <div className="flex w-[36px] shrink-0 bg-[#d9d9d9]">
      <div className="w-[26px]">
        {[sideA, sideB, sideC].map((g, i) => (
          <div key={i} role="toolbar" className="border-b-2 border-r border-black pl-px pr-px pt-px first:pt-[2px]">
            {g.map((ic) => (
              <button key={ic.label} aria-label={ic.label} className={"flex w-full items-center justify-center " + (i === 1 ? "h-[20px]" : "h-[20px]")}>
                <Art art={ic.art} size={16} box={16} />
              </button>
            ))}
            {i === 2 && <DockMarks row />}
          </div>
        ))}
      </div>
      <div className="ml-[2px] w-[5px] border-l-2 border-r-2 border-l-white border-r-[#222]" />
    </div>
  );
}

/* ---------- 3D view ---------- */

const BLUE_EDGES = "M913 181 L1470 431 L1466 550 L1143 781 L586 530 M1466 550 L909 299 M1143 781 L1147 663 L591 413 M1147 663 L1470 431";
const GREEN_EDGES = "M591 413 L913 181 L909 299 L586 530 Z";

/* racks and slots of the chassis interior, on a 2.8 x 3 grid */
const RACK =
  "M86 759 L47 738 L949 42 L989 62 M84 828 L43 810 L949 113 L985 132 M83 900 L40 880 L949 185 L985 205 M80 970 L38 951 L945 256 M78 1040 L36 1023 L941 327 L980 348 M74 1112 L34 1093 L938 399 L976 417 " +
  "M100 838 L982 150 L1000 158 M90 842 L985 138 M150 850 L1015 175 M115 892 L760 390 L985 222 M125 880 L750 385 L985 200 M290 757 L560 545 L760 395 " +
  "M86 918 L537 1133 L1437 437 L1440 378 M545 1110 L1437 420 M100 900 L860 1230 M120 875 L862 1213 M86 835 L86 918 M568 1045 L1205 555 L1385 425 M600 1095 L1300 560 M568 1045 L1180 570 ";

const SLOTS =
  "M115 828 L115 890 L537 1090 L542 1035 Z M537 1133 L542 1035 M150 865 L290 935 V958 L150 890 Z M327 958 L470 1028 V1047 L327 977 Z M115 880 L537 1078 " +
  "M290 697 L290 757 L714 958 L714 903 Z M325 740 L465 808 V828 L325 758 Z M500 823 L645 893 V913 L500 845 Z " +
  "M327 655 L327 725 L753 927 L753 870 L330 665 M362 705 L503 775 V797 L362 727 Z M540 793 L684 862 V883 L540 813 Z M335 672 L780 882 L740 915 " +
  "M503 517 L503 595 L928 795 L928 738 L503 532 M537 560 L678 645 V664 L537 590 M714 658 L858 727 V749 L714 680 Z M570 515 L993 718 L955 752 L928 738 M570 515 L540 540 " +
  "M753 337 L753 400 L1177 600 L1180 542 Z M745 385 L1177 592 M787 380 L930 455 V472 L787 400 Z M966 466 L1110 533 V556 L966 487 Z M757 345 L1205 556 " +
  "M928 203 L928 265 L1352 467 L1352 408 Z M962 248 L1105 315 V335 L962 268 Z M1140 333 L1283 400 V421 L1140 352 Z M1352 467 L1410 425 M985 225 L1380 410 M960 215 L1005 180";

/* board edges and fan tray, on a 3 x 3 grid */
const TRAY =
  "M-267 -270 L565 103 M-235 -250 L560 115 M-262 -262 L565 108 M565 103 L-396 790 L-415 782 M580 112 L-392 797 M575 108 L-30 545 M585 118 L0 530 M580 110 L672 150 L675 75 L228 400 M670 155 L230 472 M655 158 L236 455 " +
  "M218 387 L216 472 M222 388 V474 M230 390 V470 M220 387 L830 660 L832 707 M226 395 L826 664 L826 710 M220 472 L790 728 M230 462 L222 474 M830 660 L320 1035 L315 1062 M826 664 L326 1040 M832 707 L345 1064 M822 708 L340 1058 M322 1035 V1066 " +
  "M-340 768 L275 1043 V1098 M-335 765 L272 1038 M-340 768 V825 M278 1043 V1100 M-404 790 L-340 825 M-404 796 L275 1102 M-340 815 L278 1094 L330 1068";

const FAN =
  "M110 412 L102 702 L213 752 L425 605 L432 325 L350 375 M102 702 L307 555 L420 603 M307 555 L310 440 M300 556 L302 430 M318 542 L418 590 M213 752 L220 470 M110 430 L222 475 M114 424 L222 466 M222 475 L330 400 M225 745 L300 556 " +
  "M140 430 C115 470 106 500 106 580 C108 630 140 645 165 643 C190 643 210 636 220 632 M146 436 C120 476 110 510 110 580 C112 624 140 638 165 640 " +
  "M340 392 C420 380 425 430 420 480 C415 570 350 680 275 692 C240 690 200 665 185 610 C165 560 155 520 180 490 " +
  "M228 600 L280 580 C300 595 330 602 350 612 C320 640 250 665 190 652 C170 650 150 645 130 640 M232 604 L278 586 C300 600 325 606 345 612 M345 606 C310 636 250 658 200 648 " +
  "M222 600 C212 540 222 470 242 420 M228 600 C220 540 232 470 250 420 M226 590 C215 540 225 500 236 430 M226 592 C270 540 316 490 316 414 M230 592 C278 540 322 480 322 410 M224 596 C250 540 290 470 305 410 M228 600 C250 560 290 500 300 420 " +
  "M265 545 C290 520 310 490 328 478 C360 482 380 455 402 440 C396 470 350 510 322 545 C300 562 270 565 265 545 M272 540 C296 520 316 494 330 484 C360 488 378 465 396 450 M262 560 L404 446 " +
  "M180 500 C150 540 150 590 225 604 M186 504 C160 540 160 580 225 598 M180 500 C200 550 215 580 225 600 M180 500 L186 504 M160 520 C150 560 160 580 180 590 " +
  "M225 600 C225 640 235 672 243 674 M229 600 C238 640 247 665 243 674 M221 602 V665 L245 670 M188 590 V646 M193 590 V646 M226 596 L310 558 L350 540 M230 590 L345 400 M345 400 C375 380 405 385 420 410 M345 410 C340 450 350 470 365 472";

type Label = [number, number, string];
const labels: Label[] = [
  [748, 356, "cabinet_default_side_maxx"],
  [748, 356, "cabinet_opening_side_minx"],
  [1189, 366, "cabinet_default_side_maxz"],
  [1030, 423, "cabinet_default_side_maxy"],
  [1008, 440, "Solid1"],
  [1026, 541, "cabinet_default_side_miny"],
  [866, 598, "cabinet_default_side_minz"],
  ...Array.from({ length: 10 }, (_, i): Label => [1255 - i * 6, 553 + Math.round(i * 4.3), i ? `Opening.${i}` : "Opening"]),
  ...Array.from({ length: 11 }, (_, i): Label => [1166 - i * 6, 617 + Math.round(i * 4.1), `Opening.${i + 10}`]),
];

function Viewport() {
  return (
    <main className="relative min-h-0 flex-1 overflow-hidden bg-linear-to-b from-[#6b8add] to-white">
      <svg className="absolute inset-0 h-full w-full" viewBox="282 71 1636 798" preserveAspectRatio="xMidYMid slice" role="img" aria-label="Wireframe of the chassis model">
        <g fill="none" shapeRendering="crispEdges" strokeWidth="1">
          <g stroke="#a4a3ae">
            <path d={RACK} transform="translate(560 160) scale(0.357 0.3333)" vectorEffect="non-scaling-stroke" />
            <path d={SLOTS} transform="translate(560 160) scale(0.357 0.3333)" vectorEffect="non-scaling-stroke" />
            <path d={SLOTS} transform="translate(561 160) scale(0.357 0.3333)" vectorEffect="non-scaling-stroke" />
            <path d={TRAY} transform="translate(1000 300) scale(0.3333)" vectorEffect="non-scaling-stroke" />
          </g>
          <g stroke="#808083">
            <path d={FAN} transform="translate(1080 520) scale(0.3333)" vectorEffect="non-scaling-stroke" />
            <path d={FAN} transform="translate(1160 463) scale(0.3333)" vectorEffect="non-scaling-stroke" />
          </g>
        </g>
        <g fontFamily="Liberation Sans, sans-serif" fontSize="14" fontWeight="bold" fill="#000">
          {labels.map(([x, y, t]) => (
            <text key={t} x={x} y={y}>{t}</text>
          ))}
        </g>
        <g fill="none" shapeRendering="crispEdges">
          <path d="M1092 666 L1180 610 M1193 595 L1263 545" stroke="#fff29a" strokeDasharray="7 3" />
          <path d="M1106 658 L1110 663 M1200 590 L1204 595" stroke="#fff29a" strokeWidth="2" />
          <path d={BLUE_EDGES} stroke="#a9a78c" transform="translate(0 1)" />
          <path d={BLUE_EDGES} stroke="#0a0ae6" />
          <path d={GREEN_EDGES} stroke="#0a0ae6" transform="translate(0 1)" />
          <path d={GREEN_EDGES} stroke="#0a0ae6" />
          <path d={GREEN_EDGES} stroke="#10f030" strokeDasharray="5 2" />
          <path d="M735 350 L741 352 L744 356 L750 357 M739 355 L744 350" stroke="#20ee30" strokeWidth="2" />
          <path d="M595 468 L602 471" stroke="#e02020" />
          <path d="M599 465 V473" stroke="#20d030" />
          <path d="M597 471 L603 466" stroke="#2020e0" />
        </g>
        <g transform="translate(280 720) scale(0.3333)">
          <path d="M200 252 L118 216" stroke="#8f0707" strokeWidth="10" />
          <path d="M84 200 L126 199 L108 228 Z" fill="#9c0a0a" stroke="#5c0303" strokeWidth="2" />
          <path d="M202 250 L262 208" stroke="#060682" strokeWidth="10" />
          <path d="M291 188 L252 196 L272 222 Z" fill="#060690" stroke="#03034e" strokeWidth="2" />
          <circle cx="188" cy="130" r="14" fill="#3fd0d8" />
          <circle cx="185" cy="126" r="5" fill="#8ff2f4" />
          <path d="M202 254 L204 165" stroke="#0a8a14" strokeWidth="11" />
          <path d="M205 128 L222 172 Q204 182 187 172 Z" fill="#10c41c" stroke="#0a7a14" strokeWidth="2" />
          <g fill="none" strokeWidth="4">
            <path d="M57 160 L83 188 M83 160 L57 188" stroke="#f01010" />
            <path d="M205 76 L219 90 L233 76 M219 90 V105" stroke="#10f010" />
            <path d="M309 146 H335 L310 173 H336" stroke="#1010f0" />
          </g>
        </g>
      </svg>
      <div className="absolute right-[15px] top-[2px] text-right text-white">
        <div className="font-['Lato',sans-serif] text-[28px] leading-[32px]">Ansys</div>
        <div className="mt-[2px] font-['Roboto',sans-serif] text-[13px] leading-[16px]">2022 R2</div>
      </div>
    </main>
  );
}

/* ---------- message log ---------- */

const sunken = "border-2 border-b-white border-l-[#333] border-r-white border-t-[#333]";

const messages: { t: string; kind?: "indent" | "warn" }[] = [
  { t: "Checking assembly mesh faces... Done." },
  { t: "Computing element quality (volume) ..." },
  { t: "range: 1.49886e-13m^3 -> 2.78458e-07m^3", kind: "indent" },
  { t: "Computing element quality (face alignment) ..." },
  { t: "range: 0.196105 -> 1", kind: "indent" },
  { t: "Warning: no mesh exists for cabinet_default_side_maxx, body", kind: "warn" },
  { t: "Done loading Mesh." },
];

const Check = ({ label, on }: { label: string; on?: boolean }) => (
  <label className="flex items-center gap-[6px]">
    <span className="relative flex h-[13px] w-[13px]">
      <input type="checkbox" defaultChecked={on} className="peer h-[13px] w-[13px] appearance-none border border-b-white border-l-[#333] border-r-white border-t-[#333] bg-white" />
      <svg className="pointer-events-none absolute inset-0 hidden peer-checked:block" width="13" height="13" fill="none" stroke="#000" strokeWidth="2" aria-hidden="true">
        <path d="M3 6 L5.500 9 L10 3.500" />
      </svg>
    </span>
    {label}
  </label>
);

function MessageLog() {
  return (
    <section className="flex min-w-0 flex-[805] flex-col">
      <div className="flex min-h-0 flex-1">
        <div className="min-w-0 flex-1 overflow-hidden border-l-2 border-t-2 border-[#222] bg-white pl-[4px] text-[13px] leading-[16px]">
          {messages.map((m) => (
            <p key={m.t} className={m.kind === "indent" ? "pl-[56px]" : m.kind === "warn" ? "text-[#f00000]" : ""}>{m.t}</p>
          ))}
        </div>
        <div className="flex w-[17px] flex-col bg-[#f4f4f4]">
          <button aria-label="Scroll log up" className={"flex h-[17px] items-center justify-center bg-[#f0f0f0] " + raised}><Arrow up /></button>
          <div className="flex-1" />
          <div className={"h-[8px] bg-[#f0f0f0] " + raised} />
          <button aria-label="Scroll log down" className={"flex h-[17px] items-center justify-center bg-[#f0f0f0] " + raised}><Arrow /></button>
        </div>
      </div>
      <div className="flex h-[25px] shrink-0 items-center pl-[5px] text-[14px]">
        <Check label="Verbose" />
        <div className="w-[10px]" />
        <Check label="Log" on />
        <button className="ml-[7px] h-[24px] border border-b-2 border-r-2 border-b-black border-l-white border-r-black border-t-white px-[6px] text-[14px] leading-[20px]">Save</button>
      </div>
    </section>
  );
}

/* ---------- geometry form ---------- */

function Combo({ label, value, wide }: { label: string; value: string; wide?: boolean }) {
  return (
    <span className={"relative flex " + (wide ? "w-[100px]" : "w-[40px]")}>
      <select
        aria-label={label}
        defaultValue={value}
        className={
          "w-full appearance-none text-[13px] outline-none " +
          (wide ? "h-[21px] bg-white pl-[1px] " + sunken : "h-[22px] border border-b-white border-l-[#777] border-r-white border-t-[#777] bg-[#d9d9d9] pl-[3px]")
        }
      >
        <option>{value}</option>
      </select>
      <span className="pointer-events-none absolute bottom-[2px] right-[2px] top-[2px] flex w-[10px] items-center justify-center border-b border-r border-black bg-[#d9d9d9]">
        <Arrow />
      </span>
    </span>
  );
}

const bevel = "border border-b-2 border-r-2 border-b-black border-l-white border-r-black border-t-white";

const coords: [string, string, string, string][] = [
  ["xS", "-554.1818", "xE", "10.271345"],
  ["yS", "-64.28171", "yE", "51.074661"],
  ["zS", "-1.27", "zE", "430.8475"],
];

function Coord({ name, value }: { name: string; value: string }) {
  return (
    <div className="flex items-center">
      <label htmlFor={name} className="h-[20px] w-[19px] bg-[#ffbd8a] text-center text-[14px] leading-[20px]">{name}</label>
      <input id={name} defaultValue={value} className={"h-[22px] w-[62px] bg-white text-[13px] outline-none " + sunken + (value.length > 8 ? " text-left" : " text-right")} />
      <Combo label={name + " unit"} value="mm" />
    </div>
  );
}

function GeometryForm() {
  return (
    <form className="flex min-w-0 flex-[823] items-start border-l-[3px] border-black pl-[5px] pt-[2px] text-[13px]" onSubmit={(e) => e.preventDefault()}>
      <div className="w-[192px] shrink-0">
        <div className="flex h-[21px] items-center pl-[3px]">
          <span className="w-[48px]">Geom</span>
          <Combo label="Geom" value="Prism" wide />
        </div>
        <button type="button" className={"mt-[9px] h-[24px] w-[68px] leading-[20px] " + bevel}>Autoscale</button>
        <div className="mt-[9px] flex gap-[4px] pl-[2px]">
          <button type="submit" className={"flex h-[22px] w-[61px] items-center gap-[2px] pl-px " + bevel}>
            <svg width="17" height="16" viewBox="0 0 17 16" aria-hidden="true"><path d="M1 8 L3.500 6.500 L6.500 10.500 L14.500 1.500 L16 3 L7 14.500 Z" fill="#8bea4c" stroke="#3f9620" /></svg>
            Apply
          </button>
          <button type="reset" className={"flex h-[22px] w-[62px] items-center gap-[3px] pl-[2px] " + bevel}>
            <svg width="14" height="16" viewBox="0 0 14 16" fill="#5aa9ee" stroke="#2463b0" strokeWidth="0.700" aria-hidden="true">
              <path d="M1 7 Q1 2 7 2.500 L7 0.500 L13 4 L8 7.500 V5.500 Q4.500 5 4 7 Z" />
              <path d="M13 9 Q13 14 7 13.500 V15.500 L1 12 L6 8.500 V10.500 Q9.500 11 10 9 Z" />
            </svg>
            Reset
          </button>
          <button type="button" className={"flex h-[22px] w-[53px] items-center gap-[4px] pl-[2px] " + bevel}>
            <svg width="14" height="16" viewBox="0 0 14 16" aria-hidden="true">
              <rect x="0.500" y="0.500" width="13" height="15" fill="#e4f0fd" stroke="#4b8fd6" />
              <path d="M2 2.500 H4 M10 2.500 H12 M2 13.500 H4 M10 13.500 H12" stroke="#4b8fd6" strokeWidth="1.500" />
            </svg>
            Edit
          </button>
        </div>
      </div>
      <div className="w-[244px] shrink-0">
        <div className="flex h-[21px] pl-[71px]"><Combo label="Extent type" value="Start / end" wide /></div>
        <div className="mt-[2px] grid grid-cols-2 gap-x-[2px] gap-y-[2px]">
          {coords.map(([a, av, b, bv]) => (
            <React.Fragment key={a}>
              <Coord name={a} value={av} />
              <Coord name={b} value={bv} />
            </React.Fragment>
          ))}
        </div>
      </div>
    </form>
  );
}

export default function App() {
  return (
    <div className="flex h-screen flex-col overflow-hidden bg-[#d9d9d9] font-['Liberation_Sans',sans-serif] text-[13px] text-black">
      <TitleBar />
      <MainToolbar />
      <div className="flex min-h-0 flex-1">
        <Sidebar />
        <SideTools />
        <div className="flex min-w-0 flex-1 flex-col">
          <Viewport />
          <div className="h-[6px] shrink-0 border-b-2 border-[#222] shadow-[inset_0_-2px_0_#fff]" />
          <div className="flex h-[163px] shrink-0 pt-[4px]">
            <MessageLog />
            <div className="w-[5px]" />
            <GeometryForm />
          </div>
        </div>
      </div>
    </div>
  );
}
